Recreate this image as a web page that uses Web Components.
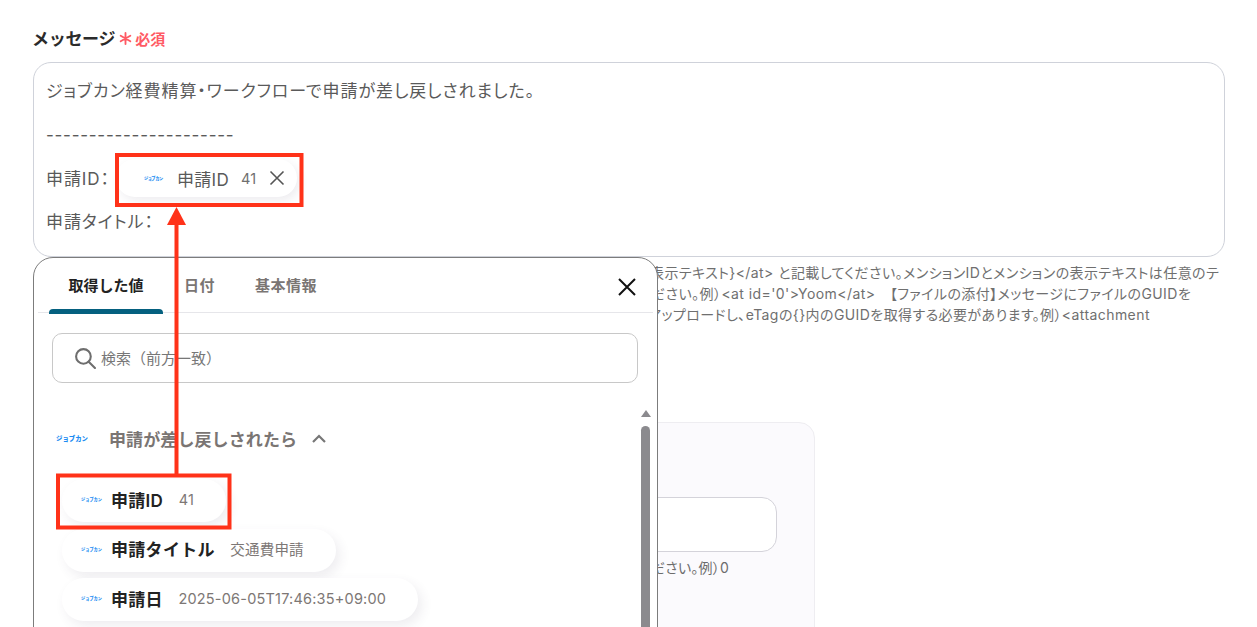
<!DOCTYPE html>
<html lang="ja"><head><meta charset="utf-8"><style>
html,body{margin:0;padding:0;background:#fff;overflow:hidden;height:627px}
body{font-family:Inter,"Noto Sans CJK JP",sans-serif}
</style></head><body>
<y-page>
  <y-label slot="label">メッセージ</y-label>
  <y-editor slot="editor">
    <div>ジョブカン経費精算・ワークフローで申請が差し戻しされました。</div>
    <div class="dash">----------------------</div>
    <div class="row">申請ID：<y-chip logo="21" mode="token" name="申請ID" value="41"></y-chip></div>
    <div class="last">申請タイトル：</div>
  </y-editor>
  <y-help slot="help">
    <span style="--i:617px">表示テキスト}&lt;/at&gt; と記載してください。メンションIDとメンションの表示テキストは任意のテ</span>
    <span style="--i:618px">ださい。例）&lt;at id='0'&gt;Yoom&lt;/at&gt;　【ファイルの添付】メッセージにファイルのGUIDを</span>
    <span style="--i:615px">アップロードし、eTagの{}内のGUIDを取得する必要があります。例）&lt;attachment</span>
  </y-help>
  <y-card slot="card"></y-card>
  <y-panel slot="overlay">
    <y-chip name="申請ID" value="41"></y-chip>
    <y-chip name="申請タイトル" value="交通費申請"></y-chip>
    <y-chip name="申請日" value="2025-06-05T17:46:35+09:00"></y-chip>
  </y-panel>
  <y-annotation slot="overlay"></y-annotation>
</y-page>
<script>
const def=(name,html,init)=>customElements.define(name,class extends HTMLElement{
  constructor(){super();this.attachShadow({mode:"open"}).innerHTML=html}
  connectedCallback(){init&&init(this)}
});
const CJK='Inter,"Noto Sans CJK JP",sans-serif';
def("y-page",`<style>
:host{display:block;position:relative;width:1257px;height:627px;overflow:hidden;box-sizing:border-box;padding:26px 32px 0 33px;font-family:${CJK}}
</style><slot name="label"></slot><slot name="editor"></slot><slot name="help"></slot><slot name="card"></slot><slot name="overlay"></slot>`);
def("y-label",`<style>
:host{display:flex;align-items:center;height:22px;margin-bottom:14px;margin-left:-1px;font-size:17px;font-weight:700;color:#2b2b2b;letter-spacing:-.3px}
.req{display:flex;align-items:center;margin-left:4px;margin-top:2px;color:#ff5a64;font-size:15px;letter-spacing:0}
svg{width:13px;height:13px;margin-right:3px}
</style><slot></slot><span class="req"><svg viewBox="0 0 14 14" fill="none" stroke="#ff5a64" stroke-width="2" stroke-linecap="round"><path d="M7 1v12M1.8 4l10.4 6M12.200 4 1.800 10"/></svg>必須</span>`);
def("y-editor",`<style>
:host{display:block;box-sizing:border-box;height:195px;border:1px solid #cfd2da;border-radius:18px;padding:4px 12px;font-size:17px;color:#5a5a5a;background:#fff;font-feature-settings:"palt"}
::slotted(div){display:flex;align-items:center;height:45px;letter-spacing:.93px;white-space:nowrap}
::slotted(.dash){letter-spacing:.74px}
::slotted(.row){height:40px}
::slotted(.last){height:46px}
</style><slot></slot>`);
const logo=`<span class="logo">ジョブカン</span>`;
def("y-chip",`<style>
:host{display:flex;width:max-content;box-sizing:border-box;height:43px;align-items:center;border-radius:22px;background:#fff;box-shadow:4px 5px 12px rgba(70,60,90,.09);padding:0 32px 3px 19px;margin-bottom:6.5px;color:#222;font-size:17px;font-weight:600;white-space:nowrap;letter-spacing:.3px}
:host([mode=token]){height:38px;margin:2px 0 0 6px;padding:0 12px 0 27px;color:#5a5a5a;font-weight:400;letter-spacing:.3px;box-shadow:3px 4px 10px rgba(70,60,90,.09)}
.logo{color:#1b8cf2;font-size:4.2px;font-weight:900;width:21px;margin-right:9px;letter-spacing:0;text-align:center;white-space:nowrap}
:host([mode=token]) .logo{margin-right:13px}
.v{margin-left:15.5px;font-size:14.500px;font-weight:400;color:#7d7775;letter-spacing:.2px}
:host([mode=token]) .v{margin-left:12px;color:#6f6f6f}
svg{display:none;width:16px;height:16px;margin-left:13px}
:host([mode=token]) svg{display:block}
</style>${logo}<span class="n"></span><span class="v"></span>
<svg viewBox="0 0 16 16" fill="none" stroke="#555" stroke-width="1.6"><path d="M1.5 1.5l13 13M14.500 1.500l-13 13"/></svg>`,
el=>{const s=el.shadowRoot;s.querySelector(".n").textContent=el.getAttribute("name");s.querySelector(".v").textContent=el.getAttribute("value")});
def("y-help",`<style>
:host{display:block;margin-top:5px;font-size:14px;line-height:21px;color:#6f6f6f;white-space:nowrap;font-feature-settings:"palt"}
::slotted(span){display:block;margin-left:var(--i);letter-spacing:.42px}
</style><slot></slot>`);
def("y-card",`<style>
:host{display:block;margin:97px 0 0 300px;width:482px;height:300px;box-sizing:border-box;background:#fbfafd;border:1px solid #eeedf1;border-radius:16px;padding:74px 37px 0 0}
.i{height:55px;box-sizing:border-box;background:#fff;border:1px solid #d4d3da;border-radius:15px}
.t{margin-top:6px;text-align:right;font-size:14px;line-height:20px;color:#6c6c6c;letter-spacing:.2px;padding-right:48px;font-feature-settings:"palt"}
</style><div class="i"></div><div class="t">ださい。例）0</div>`);
def("y-panel",`<style>
:host{position:absolute;left:33px;top:257px;width:625px;height:420px;box-sizing:border-box;background:#fff;border:1px solid #7c7c7c;border-radius:20px;font-size:15px;display:block}
.tabs{position:relative;display:flex;height:55px;border-bottom:1px solid #e6e6ea;margin:0 0 0 4px;padding-left:11px;align-items:center;width:615px;box-sizing:border-box}
.tab{font-weight:600;color:#7a7573;letter-spacing:.5px;padding-bottom:1px}
.tab.on{position:relative;width:114px;text-align:center;color:#222;height:55px;line-height:56px;margin-right:21px;box-sizing:border-box;padding:0;letter-spacing:0}
.tab.on::after{content:"";position:absolute;left:0;right:0;bottom:-1px;height:5px;background:#04607f;border-radius:4px 4px 0 0}
.tab.b{margin-left:40px}
.close{margin-left:auto;margin-right:16px;width:20px;height:20px;display:block;margin-top:4px}
.search{display:flex;align-items:center;box-sizing:border-box;margin:20px 19px 0 18px;height:50px;border:1px solid #c8c8c8;border-radius:10px;padding:0 0 0 21px;color:#777;font-size:15px}
.search svg{width:22px;height:22px;margin-right:5px}
.search span{position:relative;top:-1px}
.group{display:flex;align-items:center;height:22px;margin:44px 0 0 22px;font-size:17px;font-weight:600;color:#7a7573;letter-spacing:.1px}
.group .logo{color:#1b8cf2;font-size:6.4px;font-weight:900;width:32px;margin-right:21px;letter-spacing:0;white-space:nowrap}
.group svg{width:16px;height:10px;margin-left:14px;margin-top:2px}
.list{margin:30px 0 0 28px}
.sb{position:absolute;left:607px;top:152px;width:10px;height:270px}
.sb i{display:block;width:0;height:0;margin:0 auto 9px;border:5px solid transparent;border-top:0;border-bottom:7px solid #8b8a8e}
.sb b{display:block;width:9px;height:260px;background:#8b8a8e;border-radius:5px 5px 0 0}
</style>
<div class="tabs"><div class="tab on">取得した値</div><div class="tab">日付</div><div class="tab b">基本情報</div>
<svg class="close" viewBox="0 0 20 20" fill="none" stroke="#111" stroke-width="2"><path d="M2 2l16 16M18 2 2 18"/></svg></div>
<div class="search"><svg viewBox="0 0 21 21" fill="none" stroke="#6e6e6e" stroke-width="2"><circle cx="9" cy="9" r="7"/><path d="M14 14l6 6" stroke-linecap="round"/></svg><span>検索（前方一致）</span></div>
<div class="group"><span class="logo">ジョブカン</span>申請が差し戻しされたら<svg viewBox="0 0 16 10" fill="none" stroke="#777" stroke-width="2.2"><path d="M2 8l6-6 6 6"/></svg></div>
<div class="list"><slot></slot></div>
<div class="sb"><i></i><b></b></div>`);
def("y-annotation",`<style>
:host{position:absolute;inset:0;display:block;pointer-events:none}
svg{position:absolute;left:0;top:0;width:1257px;height:627px}
</style><svg viewBox="0 0 1257 627" fill="none" stroke="#ff3219" stroke-width="4">
<rect x="117" y="155" width="184.500" height="50"/>
<rect x="58" y="475.500" width="171.500" height="52"/>
<path d="M176.500 475V222"/>
<path d="M176.500 207l9.500 18h-19z" fill="#ff3219" stroke="none"/>
</svg>`);
</script></body></html>
